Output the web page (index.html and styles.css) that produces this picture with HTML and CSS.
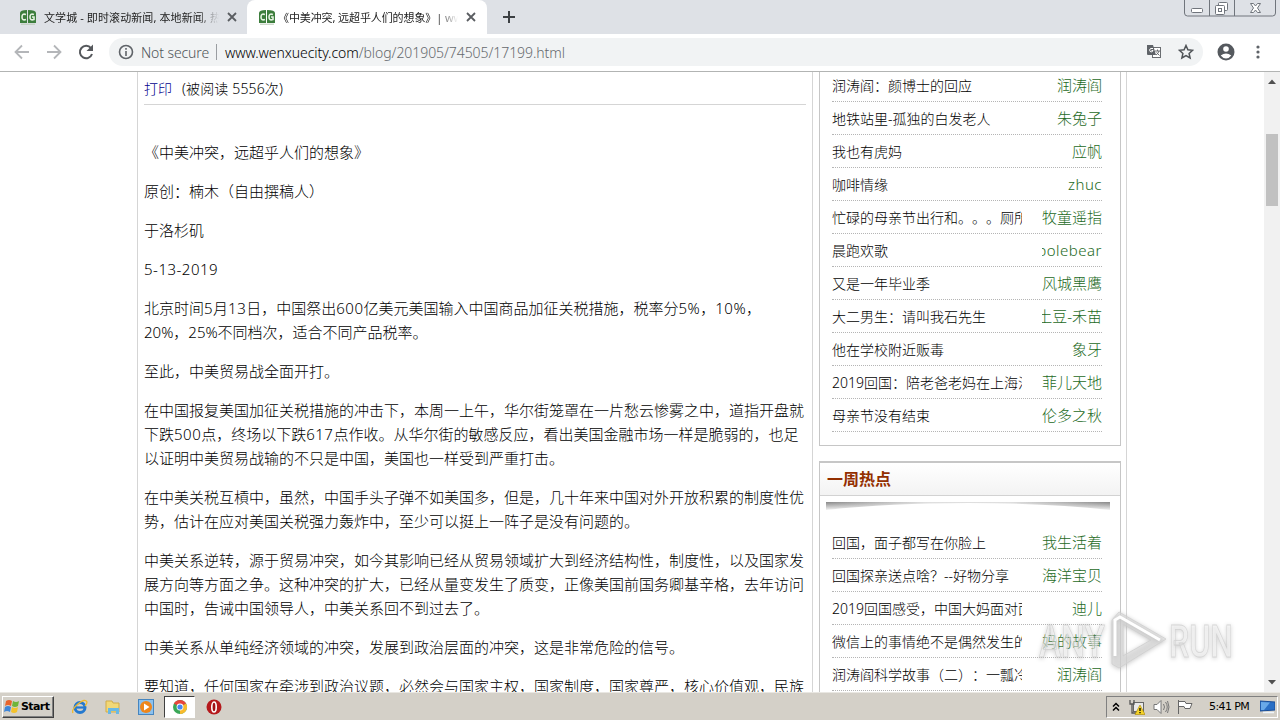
FILE: index.html
```html
<!DOCTYPE html>
<html lang="zh-CN">
<head>
<meta charset="UTF-8">
<title>《中美冲突，远超乎人们的想象》</title>
<link rel="stylesheet" href="styles.css">
</head>
<body>

<svg class="defs" width="0" height="0">
  <symbol id="favicon" viewBox="0 0 16 16">
    <path d="M0 4q0-3 7-3v13H0zM8 1q8 0 8 3v10H8z" fill="#3c7d3c"/>
    <path d="M6 5.500Q2 4 2 8t4 2.500M14 5.500Q10 4 10 8t4 2.500V8h-2" fill="none" stroke="#e4f2e0" stroke-width="1.600"/>
    <path d="M1 15.200h14" stroke="#b9c9b5"/>
  </symbol>
  <symbol id="cross" viewBox="0 0 10 10">
    <path d="M1 1l8 8M9 1L1 9" stroke="#5a5d61" stroke-width="1.800"/>
  </symbol>
</svg>

<div class="tabs">
  <div class="tab">
    <svg class="fav"><use href="#favicon"/></svg>
    <span class="tab-title t1">文学城 - 即时滚动新闻, 本地新闻, 热点</span>
    <svg class="close"><use href="#cross"/></svg>
  </div>
  <div class="tab active">
    <svg class="fav"><use href="#favicon"/></svg>
    <span class="tab-title t2">《中美冲突, 远超乎人们的想象》| www</span>
    <svg class="close"><use href="#cross"/></svg>
  </div>
  <svg class="plus" width="12" height="12"><path d="M6 0v12M0 6h12" stroke="#3c4043" stroke-width="2"/></svg>
  <svg class="winbtns" width="94" height="18" fill="none" stroke="#70757c">
    <path d="M1.500 0v13q0 3 3 3h85q3 0 3-3V0M26.500 0v16M51.500 0v16"/>
    <rect x="8.500" y="8.500" width="11" height="4" rx="1" fill="#fff"/>
    <rect x="35.500" y="2.500" width="9" height="8" rx="1" fill="#fff"/>
    <rect x="32.500" y="5.500" width="9" height="9" rx="1" fill="#fff"/>
    <rect x="35.500" y="8.500" width="3" height="3"/>
    <path d="M67.500 3.500h3l2 2.500 2-2.500h3l-3 4.500 3 4.500h-3l-2-2.500-2 2.500h-3l3-4.500z" fill="#fff"/>
  </svg>
</div>

<div class="toolbar">
  <div class="nav">
    <svg width="16" height="16" fill="none" stroke="#b4b6b9" stroke-width="1.800"><path d="M15 8H2M8 1.500L1.500 8 8 14.500"/></svg>
    <svg width="16" height="16" fill="none" stroke="#b4b6b9" stroke-width="1.800"><path d="M1 8h13M8 1.500L14.500 8 8 14.500"/></svg>
    <svg width="16" height="16"><path d="M13 4.200A6.200 6.200 0 1 0 14 10" fill="none" stroke="#55585c" stroke-width="2"/><path d="M15 0.500V7H8.500z" fill="#55585c"/></svg>
  </div>
  <div class="omnibox">
    <svg width="16" height="16" fill="none" stroke="#5f6368" stroke-width="1.600"><circle cx="8" cy="8" r="6.500"/><path d="M8 7v5M8 4v1.700"/></svg>
    <span class="secure">Not secure</span>
    <span class="sep"></span>
    <span class="url"><b>www.wenxuecity.com</b>/blog/201905/74505/17199.html</span>
    <svg class="translate" width="16" height="16">
      <rect x="6.500" y="3.500" width="8" height="10" fill="#fff" stroke="#6a6d71"/>
      <path d="M1 1h6l3 10H2q-1 0-1-1z" fill="#5f6368"/>
      <path d="M7 4.500H5A1.700 1.700 0 1 0 7 6.500H5.500" fill="none" stroke="#fff"/>
      <path d="M9 7h5M11.500 5.500V7M13 7q-1 3-3 4M10.500 8.500l3 3" fill="none" stroke="#6a6d71"/>
    </svg>
    <svg class="star" width="16" height="16"><path d="M8 1.500l1.900 4.300 4.700.5-3.500 3.100 1 4.600L8 11.600 3.900 14l1-4.600L1.400 6.300l4.700-.5z" fill="none" stroke="#4f5357" stroke-width="1.500"/></svg>
  </div>
  <svg class="user" width="18" height="18"><circle cx="9" cy="9" r="8.500" fill="#55595e"/><circle cx="9" cy="6" r="2.800" fill="#fff"/><path d="M3.700 12.500Q9 8.500 14.300 12.500 12 15.500 9 15.500t-5.300-3z" fill="#fff"/></svg>
  <svg class="dots" width="4" height="14" fill="#5f6368"><circle cx="2" cy="2" r="1.600"/><circle cx="2" cy="7" r="1.600"/><circle cx="2" cy="12" r="1.600"/></svg>
</div>

<div class="viewport">
  <div class="page">
    <div class="article">
      <div class="meta"><a>打印</a><span>(被阅读 5556次)</span></div>
      <p class="first">《中美冲突，远超乎人们的想象》</p>
      <p>原创<s>：</s>楠木（自由撰稿人）</p>
      <p>于洛杉矶</p>
      <p><i>5-13-2019</i></p>
      <p>北京时间<i>5</i>月<i>13</i>日，中国祭出<i>600</i>亿美元美国输入中国商品加征关税措施，税率分<i>5%</i>，<i>10%</i>，<br>20%，25%不同档次，适合不同产品税率。</p>
      <p>至此，中美贸易战全面开打。</p>
      <p>在中国报复美国加征关税措施的冲击下，本周一上午，华尔街笼罩在一片愁云惨雾之中，道指开盘就<br>下跌<i>500</i>点，终场以下跌<i>617</i>点作收。从华尔街的敏感反应，看出美国金融市场一样是脆弱的，也足<br>以证明中美贸易战输的不只是中国，美国也一样受到严重打击。</p>
      <p>在中美关税互槓中，虽然，中国手头子弹不如美国多，但是，几十年来中国对外开放积累的制度性优<br>势，估计在应对美国关税强力轰炸中，至少可以挺上一阵子是没有问题的。</p>
      <p>中美关系逆转，源于贸易冲突，如今其影响已经从贸易领域扩大到经济结构性，制度性，以及国家发<br>展方向等方面之争。这种冲突的扩大，已经从量变发生了质变，正像美国前国务卿基辛格，去年访问<br>中国时，告诫中国领导人，中美关系回不到过去了。</p>
      <p>中美关系从单纯经济领域的冲突，发展到政治层面的冲突，这是非常危险的信号。</p>
      <p>要知道，任何国家在牵涉到政治议题，必然会与国家主权，国家制度，国家尊严，核心价值观，民族</p>
    </div>
    <div class="side">
      <div class="box recent">
        <ul>
          <li><a>润涛阎<s>：</s>颜博士的回应</a><em>润涛阎</em></li>
          <li><a>地铁站里-孤独的白发老人</a><em>朱兔子</em></li>
          <li><a>我也有虎妈</a><em>应帆</em></li>
          <li><a>咖啡情缘</a><em class="lat">zhuc</em></li>
          <li><a>忙碌的母亲节出行和。。。厕所</a><em>牧童遥指</em></li>
          <li><a>晨跑欢歌</a><em class="lat">polebear</em></li>
          <li><a>又是一年毕业季</a><em>风城黑鹰</em></li>
          <li><a>大二男生<s>：</s>请叫我石先生</a><em>土豆-禾苗</em></li>
          <li><a>他在学校附近贩毒</a><em>象牙</em></li>
          <li><a>2019回国<s>：</s>陪老爸老妈在上海治</a><em>菲儿天地</em></li>
          <li><a>母亲节没有结束</a><em>伦多之秋</em></li>
        </ul>
      </div>
      <div class="box hot">
        <h3>一周热点</h3>
        <svg class="shade" width="284" height="9">
          <defs>
            <linearGradient id="sh"><stop offset="0" stop-color="#888"/><stop offset=".35" stop-color="#ddd"/><stop offset=".65" stop-color="#ddd"/><stop offset="1" stop-color="#888"/></linearGradient>
            <linearGradient id="fade" x2="0" y2="1"><stop offset="0" stop-color="#fff" stop-opacity="0"/><stop offset="1" stop-color="#fff"/></linearGradient>
          </defs>
          <path d="M0 0h284v8Q220 1 142 1T0 8z" fill="url(#sh)"/>
          <rect width="284" height="9" fill="url(#fade)"/>
        </svg>
        <ul>
          <li><a>回国，面子都写在你脸上</a><em>我生活着</em></li>
          <li><a>回国探亲送点啥<s>？</s>--好物分享</a><em>海洋宝贝</em></li>
          <li><a>2019回国感受，中国大妈面对面</a><em>迪儿</em></li>
          <li><a>微信上的事情绝不是偶然发生的事</a><em>妈的故事</em></li>
          <li><a>润涛阎科学故事（二）<s>：</s>一瓢冷水</a><em>润涛阎</em></li>
        </ul>
      </div>
    </div>
  </div>
  <div class="scroll">
    <svg width="8" height="5"><path d="M0 5l4-4.500L8 5z" fill="#505050"/></svg>
    <div class="thumb"></div>
    <svg width="8" height="5"><path d="M0 0l4 4.500L8 0z" fill="#505050"/></svg>
  </div>
  <svg class="watermark" width="200" height="70" viewBox="0 0 200 70">
    <g fill="#fff" fill-opacity=".4" stroke="#c4c4c4" stroke-opacity=".6" stroke-width=".8">
      <text x="3" y="51" textLength="66" lengthAdjust="spacingAndGlyphs">ANY</text>
      <text x="133" y="51" textLength="64" lengthAdjust="spacingAndGlyphs">RUN</text>
    </g>
    <path d="M76 58V14l7-8 47 27-47 29zM87 18v32l28-16z" fill="#ddd" fill-opacity=".5" fill-rule="evenodd" stroke="#cfcfcf" stroke-width=".8"/>
    <path d="M79 50V14l5-3 40 23" fill="none" stroke="#fff" stroke-width="3"/>
  </svg>
</div>

<div class="taskbar">
  <div class="start">
    <svg width="16" height="15"><path d="M2 2q3-2 6 0L7 7Q4 5 1 7z" fill="#e8642c"/><path d="M9 2q3 2 6 0l-1 5q-3 2-6 0z" fill="#6fb53b"/><path d="M1 8q3-2 6 0l-1 5q-3-2-6 0z" fill="#3f86d8"/><path d="M8 8q3 2 6 0l-1 5q-3 2-6 0z" fill="#f4c22b"/></svg>
    Start
  </div>
  <div class="quick">
    <svg width="16" height="16"><circle cx="8" cy="8.500" r="5" fill="none" stroke="#2479cf" stroke-width="3"/><path d="M4 8.500h9" stroke="#2479cf" stroke-width="2.200"/><path d="M1 14Q-1 11 6 5t9-2q0 2-2 4" fill="none" stroke="#efb92d" stroke-width="1.300"/></svg>
    <svg width="16" height="16"><path d="M1 2h6l1 2h6v9H1z" fill="#f2d877" stroke="#d1ac4a"/><path d="M3 15V9h11v6h-3v-3H6v3z" fill="#69b8e5"/></svg>
    <svg width="16" height="16"><rect x=".5" y=".5" width="15" height="15" fill="#8bc1ee" stroke="#4685bf"/><circle cx="8" cy="8" r="6" fill="#ee861b"/><path d="M6 4.500v7L11.500 8z" fill="#fff"/></svg>
    <div class="running">
      <svg width="16" height="16"><circle cx="8" cy="8" r="7" fill="#3aa757"/><path d="M8 8L1.900 4.500A7 7 0 0 1 14.100 4.500z" fill="#e8453c"/><path d="M8 8l6.100-3.500A7 7 0 0 1 8 15z" fill="#f9bb2d"/><circle cx="8" cy="8" r="3.400" fill="#fff"/><circle cx="8" cy="8" r="2.600" fill="#4688f1"/></svg>
    </div>
    <svg width="16" height="16"><circle cx="8" cy="8" r="7.500" fill="#b5191c"/><ellipse cx="8" cy="8" rx="2.200" ry="5" fill="#a01014" stroke="#fff" stroke-width="1.600"/></svg>
  </div>
  <div class="tray">
    <svg width="8" height="10" fill="none" stroke="#000" stroke-width="1.500"><path d="M1 4.500L4 1.500l3 3M1 8.500l3-3 3 3"/></svg>
    <svg class="net" width="16" height="16"><rect x="4.500" y="3.500" width="10" height="9" fill="#e9e9e9" stroke="#666"/><path d="M1 1v4h4V1M3 5v9h5" fill="none" stroke="#555" stroke-width="1.300"/><path d="M11 6l5 9.500H6z" fill="#f5d328" stroke="#a98500" stroke-width=".6"/><path d="M11 9v3M11 13v1.300" stroke="#000" stroke-width="1.300"/></svg>
    <svg class="vol" width="17" height="16" fill="none" stroke="#777"><path d="M1 5.500h3l4-4v13l-4-4H1z" fill="#fff"/><path d="M10.500 5q2 3 0 6M12.500 3q3.500 5 0 10M14.500 2q3 6 0 12"/></svg>
    <svg class="flag" width="16" height="16"><path d="M1.500 1v14M2 2.500h6l1 2h6l-2 5H8l-1-2H2" fill="#fff" stroke="#666"/></svg>
    <span class="clock">5:41 PM</span>
    <svg class="desk" width="15" height="14"><path d="M0 1l15 1v8L0 11z" fill="#2a6fc5" stroke="#1a4e97"/><path d="M1 2l9 .5L4 10H1z" fill="#69a9e8"/><path d="M3 12.500h11" stroke="#eef4fa" stroke-width="1.500"/></svg>
  </div>
</div>

</body>
</html>
```

FILE: styles.css
```css
* {
  box-sizing: border-box;
}

body {
  margin: 0;
  width: 1280px;
  height: 720px;
  overflow: hidden;
  display: flex;
  flex-direction: column;
  background: #fff;
  color: #000;
  font-family: "Noto Sans", "Noto Sans CJK SC", sans-serif;
  font-weight: 300;
  text-spacing-trim: space-all;
}

svg {
  display: block;
  flex: none;
}

.defs {
  position: absolute;
}

/* browser chrome */
.tabs {
  flex: none;
  height: 34px;
  display: flex;
  background: #dee1e6;
}

.tab {
  display: flex;
  align-items: center;
  width: 247px;
  padding-left: 20px;
  font-size: 11px;
  color: #222;
  font-weight: 400;
}

.tab.active {
  width: 240px;
  padding-left: 12px;
  background: #fff;
  border-radius: 8px 8px 0 0;
}

.fav {
  width: 16px;
  height: 16px;
}

.tab-title {
  margin-left: 8px;
  width: 175px;
  overflow: hidden;
  white-space: nowrap;
  -webkit-mask-image: linear-gradient(90deg, #000 88%, transparent);
}

.t1 {
  letter-spacing: .1px;
}

.t2 {
  margin-left: 3px;
  width: 180px;
  letter-spacing: -.1px;
}

.close {
  width: 10px;
  height: 10px;
  margin-left: 8px;
}

.plus {
  margin: 11px 0 0 16px;
}

.winbtns {
  margin-left: auto;
  margin-right: 3px;
}

.toolbar {
  flex: none;
  height: 38px;
  display: flex;
  align-items: center;
  padding-bottom: 1px;
  border-bottom: 1px solid #b2b4b3;
}

.nav {
  display: flex;
  gap: 16px;
  width: 109px;
  padding-left: 14px;
}

.omnibox {
  display: flex;
  align-items: center;
  width: 1094px;
  height: 28px;
  padding-left: 9px;
  border-radius: 14px;
  background: #f1f3f4;
  font-size: 14px;
}

.secure {
  width: 67px;
  margin-left: 7px;
  color: #4f5358;
  letter-spacing: -.1px;
  white-space: nowrap;
}

.sep {
  width: 1px;
  height: 16px;
  margin: 0 8px;
  background: #9a9da1;
}

.url {
  color: #65696d;
  letter-spacing: -.06px;
}

.url b {
  font-weight: 300;
  color: #000;
}

.translate {
  margin-left: auto;
}

.star {
  margin: 0 9px 0 16px;
}

.user {
  margin-left: 14px;
}

.dots {
  margin-left: 21px;
}

/* web page */
.viewport {
  position: relative;
  flex: none;
  display: flex;
  height: 620px;
  overflow: hidden;
}

.page {
  display: flex;
  width: 990px;
  height: 620px;
  margin-left: 137px;
  border: solid #d5d5d5;
  border-width: 0 1px;
}

.page s {
  font-family: "Noto Sans CJK TC", sans-serif;
  line-height: 1;
  text-decoration: none;
}

.article {
  width: 675px;
  padding-left: 6px;
  border-right: 1px solid #d5d5d5;
  font-size: 15px;
  line-height: 24px;
  white-space: nowrap;
}

.meta {
  display: flex;
  gap: 10px;
  width: 662px;
  height: 33px;
  padding-top: 5px;
  border-bottom: 1px solid #d5d5d5;
  font-size: 14px;
}

.meta a {
  color: #00008b;
}

.meta span {
  letter-spacing: .15px;
}

.article p {
  margin: 0 0 15px;
}

.article p.first {
  margin-top: 35px;
}

.article i {
  font-style: normal;
  letter-spacing: .5px;
}

.side {
  padding-left: 6px;
}

.box {
  width: 302px;
  border: 1px solid #c6c6c6;
}

.recent {
  height: 377px;
  margin-top: -3px;
}

.hot {
  height: 240px;
  margin-top: 15px;
  border-top-width: 2px;
}

.box ul {
  margin: 0 18px 0 12px;
  padding: 0;
  list-style: none;
}

.recent ul {
  margin-top: -1px;
}

.box li {
  display: flex;
  justify-content: space-between;
  height: 33px;
  line-height: 34px;
  border-bottom: 1px dotted #b5b5b5;
  white-space: nowrap;
}

.box li a {
  width: 190px;
  overflow: hidden;
  font-size: 14px;
}

.box li em {
  display: flex;
  justify-content: flex-end;
  width: 60px;
  overflow: hidden;
  line-height: 32px;
  font-size: 15px;
  font-style: normal;
  color: #1d6a1d;
}

.box li .lat {
  letter-spacing: .5px;
}

.box h3 {
  margin: 0;
  height: 33px;
  padding-left: 7px;
  border-bottom: 1px solid #d2d2d2;
  background: linear-gradient(#fff, #f3f3f3);
  color: #932f00;
  font-size: 16px;
  font-weight: 700;
  line-height: 33px;
}

.shade {
  margin: 6px 0 15px 6px;
}

.scroll {
  display: flex;
  flex-direction: column;
  align-items: center;
  width: 16px;
  margin-left: auto;
  padding: 7px 0;
  background: #f1f1f1;
}

.thumb {
  width: 12px;
  height: 72px;
  margin: 50px 0 auto;
  background: #c1c1c1;
}

.watermark {
  position: absolute;
  left: 1036px;
  top: 534px;
  font: 500 45px Roboto, sans-serif;
  filter: drop-shadow(0 1px 2px #aaa);
}

/* taskbar */
.taskbar {
  flex: none;
  display: flex;
  align-items: center;
  height: 28px;
  background: #d4d0c8;
  border-top: 1px solid #e9e7e2;
}

.start {
  display: flex;
  align-items: center;
  gap: 1px;
  width: 52px;
  height: 22px;
  margin-left: 2px;
  padding-left: 1px;
  border: 1px solid;
  border-color: #fff #404040 #404040 #fff;
  box-shadow: inset -1px -1px #808080;
  color: #000;
  font: 700 11px "DejaVu Sans", sans-serif;
  letter-spacing: -.6px;
}

.quick {
  display: flex;
  align-items: center;
  margin-left: 18px;
}

.quick > svg {
  margin-right: 17px;
}

.running {
  width: 31px;
  height: 22px;
  margin: 0 11px 0 -7px;
  padding: 2px 7px;
  background: #fff;
  border: 1px solid;
  border-color: #404040 #fff #fff #404040;
}

.tray {
  display: flex;
  align-items: center;
  width: 172px;
  height: 22px;
  margin-left: auto;
  margin-right: 2px;
  padding-left: 5px;
  border: 1px solid;
  border-color: #808080 #fff #fff #808080;
}

.net {
  margin-left: 9px;
}

.vol {
  margin-left: 8px;
}

.flag {
  margin-left: 7px;
}

.clock {
  width: 40px;
  margin-left: 16px;
  color: #000;
  font: 11px "DejaVu Sans", sans-serif;
  letter-spacing: -.6px;
  white-space: nowrap;
}

.desk {
  margin-left: 11px;
}
```
